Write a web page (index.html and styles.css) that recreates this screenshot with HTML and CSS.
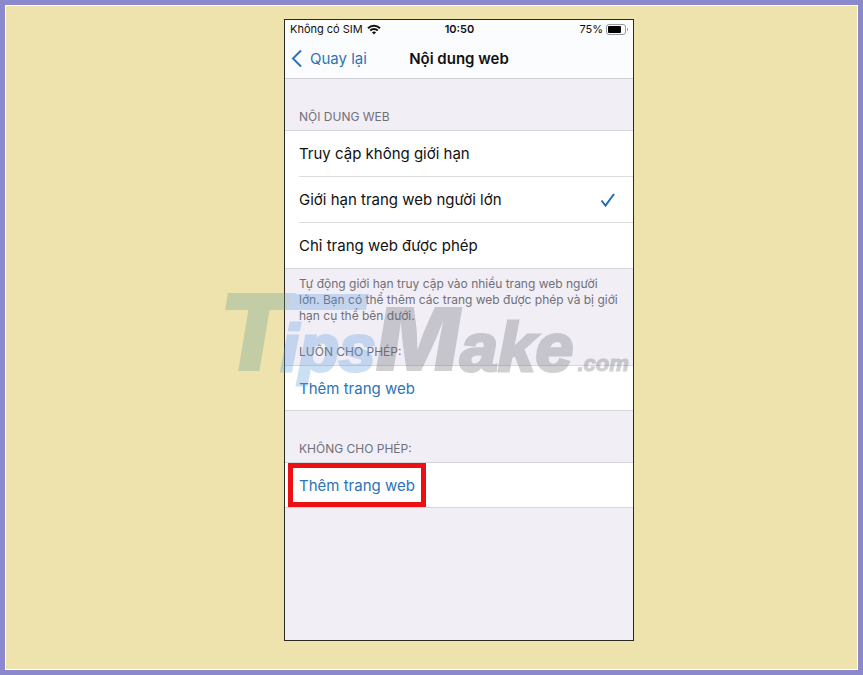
FILE: index.html
```html
<!DOCTYPE html>
<html lang="vi">
<head>
    <meta charset="UTF-8">
    <meta name="viewport" content="width=device-width, initial-scale=1.0">
    <title>Nội dung web</title>
    <link rel="stylesheet" href="styles.css">
</head>
<body>
    <main class="phone">
        <header class="top">
            <div class="status">
                <div class="carrier">
                    <span>Không có SIM</span>
                    <svg class="wifi" viewBox="0 0 14 11">
                        <path d="M1 4.2C4.4 1 9.6 1 13 4.2" />
                        <path d="M3.2 6.6C5.4 4.6 8.6 4.6 10.8 6.6" />
                        <path class="dot" d="M4.9 8.2C6.1 7.2 7.9 7.2 9.1 8.2L7 10.6Z" />
                    </svg>
                </div>
                <span class="time">10:50</span>
                <div class="battery">
                    <span>75%</span>
                    <svg class="cell" viewBox="0 0 23 11">
                        <rect class="case" x="0.5" y="0.5" width="19" height="10" rx="2.5" />
                        <rect x="2" y="2" width="13" height="7" rx="1" />
                        <path class="tip" d="M21 3.7C22.4 4.2 22.4 6.8 21 7.3Z" />
                    </svg>
                </div>
            </div>
            <nav class="nav">
                <a class="back" href="#">
                    <svg class="chevron" viewBox="0 0 12 19"><path d="M10 1.5L2 9.5L10 17.5" /></svg>
                    <span>Quay lại</span>
                </a>
                <h1>Nội dung web</h1>
            </nav>
        </header>

        <h2 class="label first">NỘI DUNG WEB</h2>
        <div class="list">
            <label class="row">
                <span>Truy cập không giới hạn</span>
                <input type="radio" name="content">
            </label>
            <label class="row">
                <span>Giới hạn trang web người lớn</span>
                <input type="radio" name="content" checked>
                <svg class="check" viewBox="0 0 16 16"><path d="M1.5 8.5L5.5 13.5L14 2" /></svg>
            </label>
            <label class="row">
                <span>Chỉ trang web được phép</span>
                <input type="radio" name="content">
            </label>
        </div>
        <p class="note">Tự động giới hạn truy cập vào nhiều trang web người lớn. Bạn có thể thêm các trang web được phép và bị giới hạn cụ thể bên dưới.</p>

        <h2 class="label">LUÔN CHO PHÉP:</h2>
        <div class="list">
            <button class="row add" type="button">Thêm trang web</button>
        </div>

        <h2 class="label last">KHÔNG CHO PHÉP:</h2>
        <div class="list">
            <button class="row add marked" type="button">Thêm trang web</button>
        </div>

        <div class="watermark">
            <span class="big-t">T</span><span class="ips">ips</span><span class="big-m">M</span><span class="ake">ake</span><span class="com">.com</span>
        </div>
    </main>
</body>
</html>
```

FILE: styles.css
```css
* {
    box-sizing: border-box;
    margin: 0;
    padding: 0;
}
body {
    min-height: 100vh;
    display: flex;
    justify-content: center;
    align-items: flex-start;
    padding: 13px 0 28px 55px;
    background: #eee2ad;
    border: 5px solid #8b88ce;
    outline: 1px solid #fff;
    outline-offset: -6px;
    font-family: Inter, "Liberation Sans", sans-serif;
    color: #111;
}
.phone {
    position: relative;
    width: 350px;
    max-width: 100%;
    min-height: 622px;
    margin-top: 1px;
    background: #f1eef6;
    border: 1px solid #2b2a22;
}
.top {
    background: #fbfcfe;
    border-bottom: 1px solid #cfced4;
}

/* status bar */
.status {
    display: grid;
    grid-template-columns: 1fr auto 1fr;
    align-items: center;
    height: 18px;
    padding: 0 4px 0 5px;
    font-size: 11px;
}
.carrier, .battery {
    display: flex;
    align-items: center;
    gap: 4px;
}
.battery {
    justify-content: flex-end;
    gap: 3px;
}
.time {
    font-weight: 600;
}
.wifi {
    width: 14px;
    height: 11px;
    fill: none;
    stroke: #111;
    stroke-width: 2;
}
.wifi .dot {
    fill: #111;
    stroke: none;
}
.cell {
    width: 23px;
    height: 11px;
}
.cell .case {
    fill: none;
    stroke: #999;
}
.cell .tip {
    fill: #999;
}

/* navigation */
.nav {
    display: grid;
    grid-template-columns: 1fr auto 1fr;
    align-items: center;
    height: 40px;
    padding: 0 6px;
}
.nav h1 {
    font-size: 15px;
    font-weight: 600;
}
.back {
    display: flex;
    align-items: center;
    gap: 7px;
    color: #2d74b5;
    font-size: 15px;
    text-decoration: none;
}
.chevron {
    width: 12px;
    height: 19px;
    fill: none;
    stroke: #2d74b5;
    stroke-width: 2;
}

/* lists */
.label {
    padding: 12px 14px 5px;
    color: #707077;
    font-size: 12px;
    font-weight: 400;
    line-height: 16px;
}
.label.first, .label.last {
    padding-top: 30px;
}
.list {
    background: #fff;
    border-top: 1px solid #d6d5da;
    border-bottom: 1px solid #d6d5da;
}
.row {
    display: flex;
    justify-content: space-between;
    align-items: center;
    height: 45px;
    margin-left: 14px;
    padding-right: 17px;
    font-size: 15px;
}
.row + .row {
    height: 46px;
    border-top: 1px solid #dddce0;
}
.row input {
    appearance: none;
}
.check {
    width: 16px;
    height: 16px;
    fill: none;
    stroke: #246cb0;
    stroke-width: 2;
}
.note {
    padding: 7px 14px 8px;
    color: #707077;
    font-size: 12px;
    line-height: 16px;
}
.add {
    height: 44px;
    background: none;
    border: none;
    color: #2d74b5;
    font-family: inherit;
    cursor: pointer;
}
.marked {
    margin-left: 3px;
    padding: 0 6px;
    border: 5px solid #ed1013;
}

/* site mark laid over the page */
.watermark {
    position: absolute;
    top: 252px;
    left: -68px;
    display: flex;
    align-items: baseline;
    font-family: "Liberation Sans", Arial, sans-serif;
    font-weight: 700;
    font-style: italic;
    line-height: 120px;
    white-space: nowrap;
    opacity: 0.3;
    pointer-events: none;
}
.big-t {
    position: relative;
    margin-right: -10px;
    color: #5f9b93;
    font-family: Inter, sans-serif;
    font-weight: 900;
    font-size: 107px;
}
.big-t::after {
    content: "";
    position: absolute;
    top: 22px;
    left: 72px;
    width: 80px;
    height: 16px;
    background: #5a9ade;
    clip-path: polygon(0 0, 100% 0, 96% 100%, 0 100%);
}
.ips {
    color: #5a9ade;
    font-size: 66px;
    -webkit-text-stroke: 3px #5a9ade;
}
.big-m {
    color: #66666e;
    font-family: Inter, sans-serif;
    font-weight: 900;
    font-size: 88px;
}
.ake {
    margin-right: 4px;
    color: #66666e;
    font-size: 68px;
    -webkit-text-stroke: 3px #66666e;
}
.com {
    color: #66666e;
    font-size: 22px;
    -webkit-text-stroke: 1px #66666e;
}
```
